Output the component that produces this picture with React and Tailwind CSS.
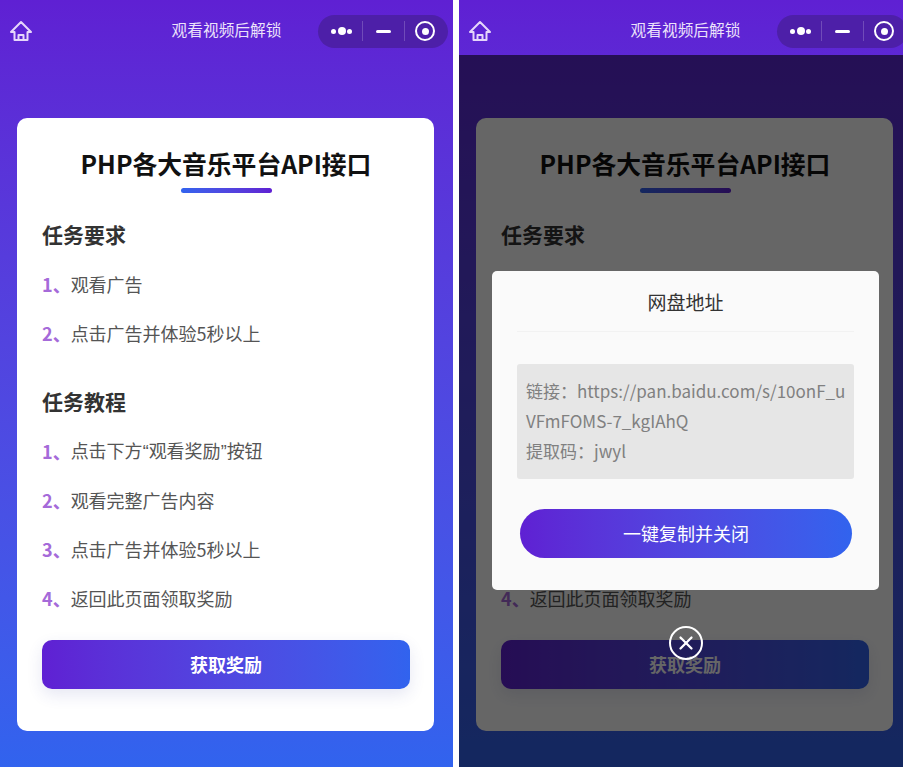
import { X } from "lucide-react";

const requirements = ["观看广告", "点击广告并体验5秒以上"];
const tutorial = [
    <>点击下方<span className="font-['Liberation_Sans']">“</span>观看奖励<span className="font-['Liberation_Sans']">”</span>按钮</>,
    "观看完整广告内容",
    "点击广告并体验5秒以上",
    "返回此页面领取奖励",
];

function HomeIcon() {
    return (
        <svg width="24" height="22" viewBox="0 0 24 22" fill="none" stroke="#e6d6fb" strokeWidth="2" strokeLinejoin="round">
            <path d="M12 2 L22 12 H18.5 V20 H5.5 V12 H2 Z" />
            <path d="M9.5 20 V15 H14.5 V20" />
        </svg>
    );
}

function Capsule() {
    return (
        <div className="flex h-[33px] w-[130px] items-center rounded-full bg-[#4d1fa8] pl-[13px]">
            <div className="flex w-[21px] items-center justify-between">
                <span className="h-[5px] w-[5px] rounded-full bg-white" />
                <span className="h-[8px] w-[8px] rounded-full bg-white" />
                <span className="h-[5px] w-[5px] rounded-full bg-white" />
            </div>
            <span className="ml-[10px] h-[20px] w-px bg-white/20" />
            <span className="ml-[13px] h-[3px] w-[15px] rounded-full bg-white" />
            <span className="ml-[13px] h-[20px] w-px bg-white/20" />
            <span className="ml-[10px] flex h-[20px] w-[20px] items-center justify-center rounded-full border-2 border-white">
                <span className="h-[7px] w-[7px] rounded-full bg-white" />
            </span>
        </div>
    );
}

function Steps({ items }) {
    return (
        <div className="mt-[8px]">
            {items.map((text, i) => (
                <div key={i} className="flex h-[49px] items-center text-[18px] text-[#555]">
                    <span className="font-bold text-[#a56ad9]">{i + 1}、</span>
                    <span>{text}</span>
                </div>
            ))}
        </div>
    );
}

function Phone({ children }) {
    return (
        <div className="relative h-[767px] w-[453px] shrink-0 bg-gradient-to-b from-[#5f20d3] to-[#3163ee]">
            <div className="grid h-[55px] grid-cols-[1fr_auto_1fr] items-center">
                <div className="pl-[9px] pt-[7px]">
                    <HomeIcon />
                </div>
                <div className="pt-[4px] text-[15.7px] text-[#ece2fa]">观看视频后解锁</div>
                <div className="justify-self-end pr-[5px] pt-[7px]">
                    <Capsule />
                </div>
            </div>

            <div className="mx-[17px] mt-[63px] h-[613px] w-[417px] rounded-[10px] bg-white pl-[25px] pr-[24px] pt-[27px]">
                <h1 className="text-center text-[24.8px] leading-[36px] font-bold text-[#111]">PHP各大音乐平台API接口</h1>
                <div className="mx-auto mt-[7px] h-[5px] w-[91px] rounded-full bg-gradient-to-r from-[#3163ee] to-[#5f20d3]" />
                <h2 className="mt-[23px] text-[21px] leading-[36px] font-bold text-[#333]">任务要求</h2>
                <Steps items={requirements} />
                <h2 className="mt-[25px] text-[21px] leading-[36px] font-bold text-[#333]">任务教程</h2>
                <Steps items={tutorial} />
                <button className="mt-[17px] h-[49px] w-full rounded-[10px] bg-gradient-to-r from-[#5f20d3] to-[#3163ee] text-[18px] font-bold text-white shadow-[0_6px_16px_rgba(50,60,160,0.12)]">
                    获取奖励
                </button>
            </div>
            {children}
        </div>
    );
}

export default function App() {
    return (
        <div className="flex h-[767px] w-[903px] gap-[6px] overflow-hidden bg-white font-['Noto_Sans_CJK_SC',sans-serif]">
            <Phone />
            <Phone>
                <div className="absolute inset-x-0 top-[55px] bottom-0 flex flex-col items-center bg-black/60 pt-[216px]">
                    <div className="h-[319px] w-[387px] rounded-[5px] bg-[#fafafa] px-[25px]">
                        <div className="flex h-[61px] items-center justify-center border-b border-[#f2f2f2] pt-[2px] text-[19px] text-[#333]">
                            网盘地址
                        </div>
                        <div className="mt-[32px] h-[115px] w-[337px] rounded-[3px] bg-[#e6e6e6] pl-[9px] pr-[4px] py-[12px] text-[17px] leading-[30px] break-all text-[#808080]">
                            <div>链接：https://pan.baidu.com/s/10onF_uVFmFOMS-7_kgIAhQ</div>
                            <div>提取码：jwyl</div>
                        </div>
                        <button className="mx-[3px] mt-[30px] h-[49px] w-[332px] rounded-full bg-gradient-to-r from-[#5f20d3] to-[#3163ee] text-[18px] text-white">
                            一键复制并关闭
                        </button>
                    </div>
                    <div className="mt-[36px] flex h-[34px] w-[34px] items-center justify-center rounded-full border-2 border-white">
                        <X size={22} strokeWidth={2.5} color="#fff" />
                    </div>
                </div>
            </Phone>
        </div>
    );
}
